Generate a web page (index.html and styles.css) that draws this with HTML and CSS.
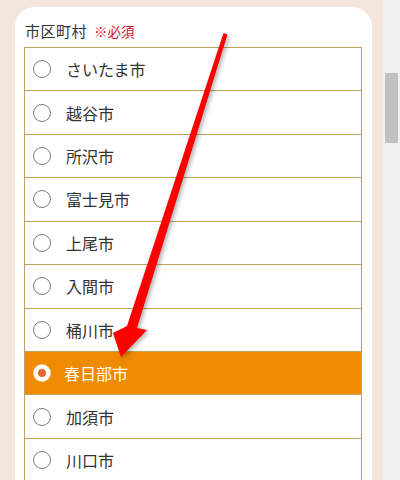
FILE: index.html
```html
<!DOCTYPE html>
<html lang="ja">
<head>
<meta charset="utf-8">
<link rel="stylesheet" href="styles.css">
</head>
<body>
<div class="page">
  <main class="main">
    <section class="card">
      <div class="label">市区町村<span class="req">※必須</span></div>
      <ul class="list">
        <li class="row"><span class="radio"></span><span class="name">さいたま市</span></li>
        <li class="row"><span class="radio"></span><span class="name">越谷市</span></li>
        <li class="row"><span class="radio"></span><span class="name">所沢市</span></li>
        <li class="row"><span class="radio"></span><span class="name">富士見市</span></li>
        <li class="row"><span class="radio"></span><span class="name">上尾市</span></li>
        <li class="row"><span class="radio"></span><span class="name">入間市</span></li>
        <li class="row"><span class="radio"></span><span class="name">桶川市</span></li>
        <li class="row selected"><span class="radio"></span><span class="name">春日部市</span></li>
        <li class="row"><span class="radio"></span><span class="name">加須市</span></li>
        <li class="row"><span class="radio"></span><span class="name">川口市</span></li>
      </ul>
    </section>
  </main>
  <div class="scrollbar"><div class="thumb"></div></div>
</div>
<svg class="arrow" width="400" height="480" viewBox="0 0 400 480">
  <polygon points="223.5,33 227.5,34.5 137,328 147,330 121,357 113,333 127,326" fill="#ff0000"/>
</svg>
</body>
</html>
```
FILE: styles.css
```css
html, body {
  margin: 0;
  padding: 0;
  width: 400px;
  height: 480px;
  overflow: hidden;
}
body {
  font-family: "Noto Sans CJK JP", "Noto Sans", sans-serif;
  color: #333;
  position: relative;
}
.page {
  display: flex;
  height: 480px;
}
.main {
  width: 383px;
  background: #f4e6dd;
  padding: 7px 11px 0 15px;
  box-sizing: border-box;
}
.card {
  background: #fff;
  border-radius: 20px 20px 0 0;
  padding: 12px 10px 0 9px;
  height: 473px;
  box-sizing: border-box;
}
.label {
  font-size: 15px;
  line-height: 24px;
  padding-left: 1px;
  margin-bottom: 4px;
  letter-spacing: 0.5px;
}
.req {
  color: #d0121b;
  font-size: 13.5px;
  margin-left: 7px;
  letter-spacing: 0;
}
.list {
  list-style: none;
  margin: 0;
  padding: 0;
  border: 1px solid #bca25c;
  border-bottom: none;
}
.row {
  display: flex;
  align-items: center;
  height: 42.43px;
  border-bottom: 1px solid #bca25c;
  padding-left: 8px;
  font-size: 16px;
}
.radio {
  width: 16px;
  height: 16px;
  border: 1px solid #7a7a7a;
  border-radius: 50%;
  background: #fff;
  margin-right: 15px;
  box-sizing: content-box;
}
.selected {
  background: #ef8b00;
  color: #fffaf0;
}
.selected .radio {
  width: 8px;
  height: 8px;
  border: 4px solid #fff;
  background: #e2682a;
  box-shadow: 0 0 0 1px #f6d9b5;
  margin-left: 1px;
  margin-right: 14px;
}
.scrollbar {
  width: 17px;
  background: #f0f0f0;
  padding-top: 73px;
  padding-left: 2px;
  box-sizing: border-box;
}
.thumb {
  width: 13px;
  height: 70px;
  background: #c1c1c1;
}
.arrow {
  position: absolute;
  left: 0;
  top: 0;
  pointer-events: none;
  filter: drop-shadow(2px 2px 2px rgba(0, 0, 0, 0.3));
}
```
